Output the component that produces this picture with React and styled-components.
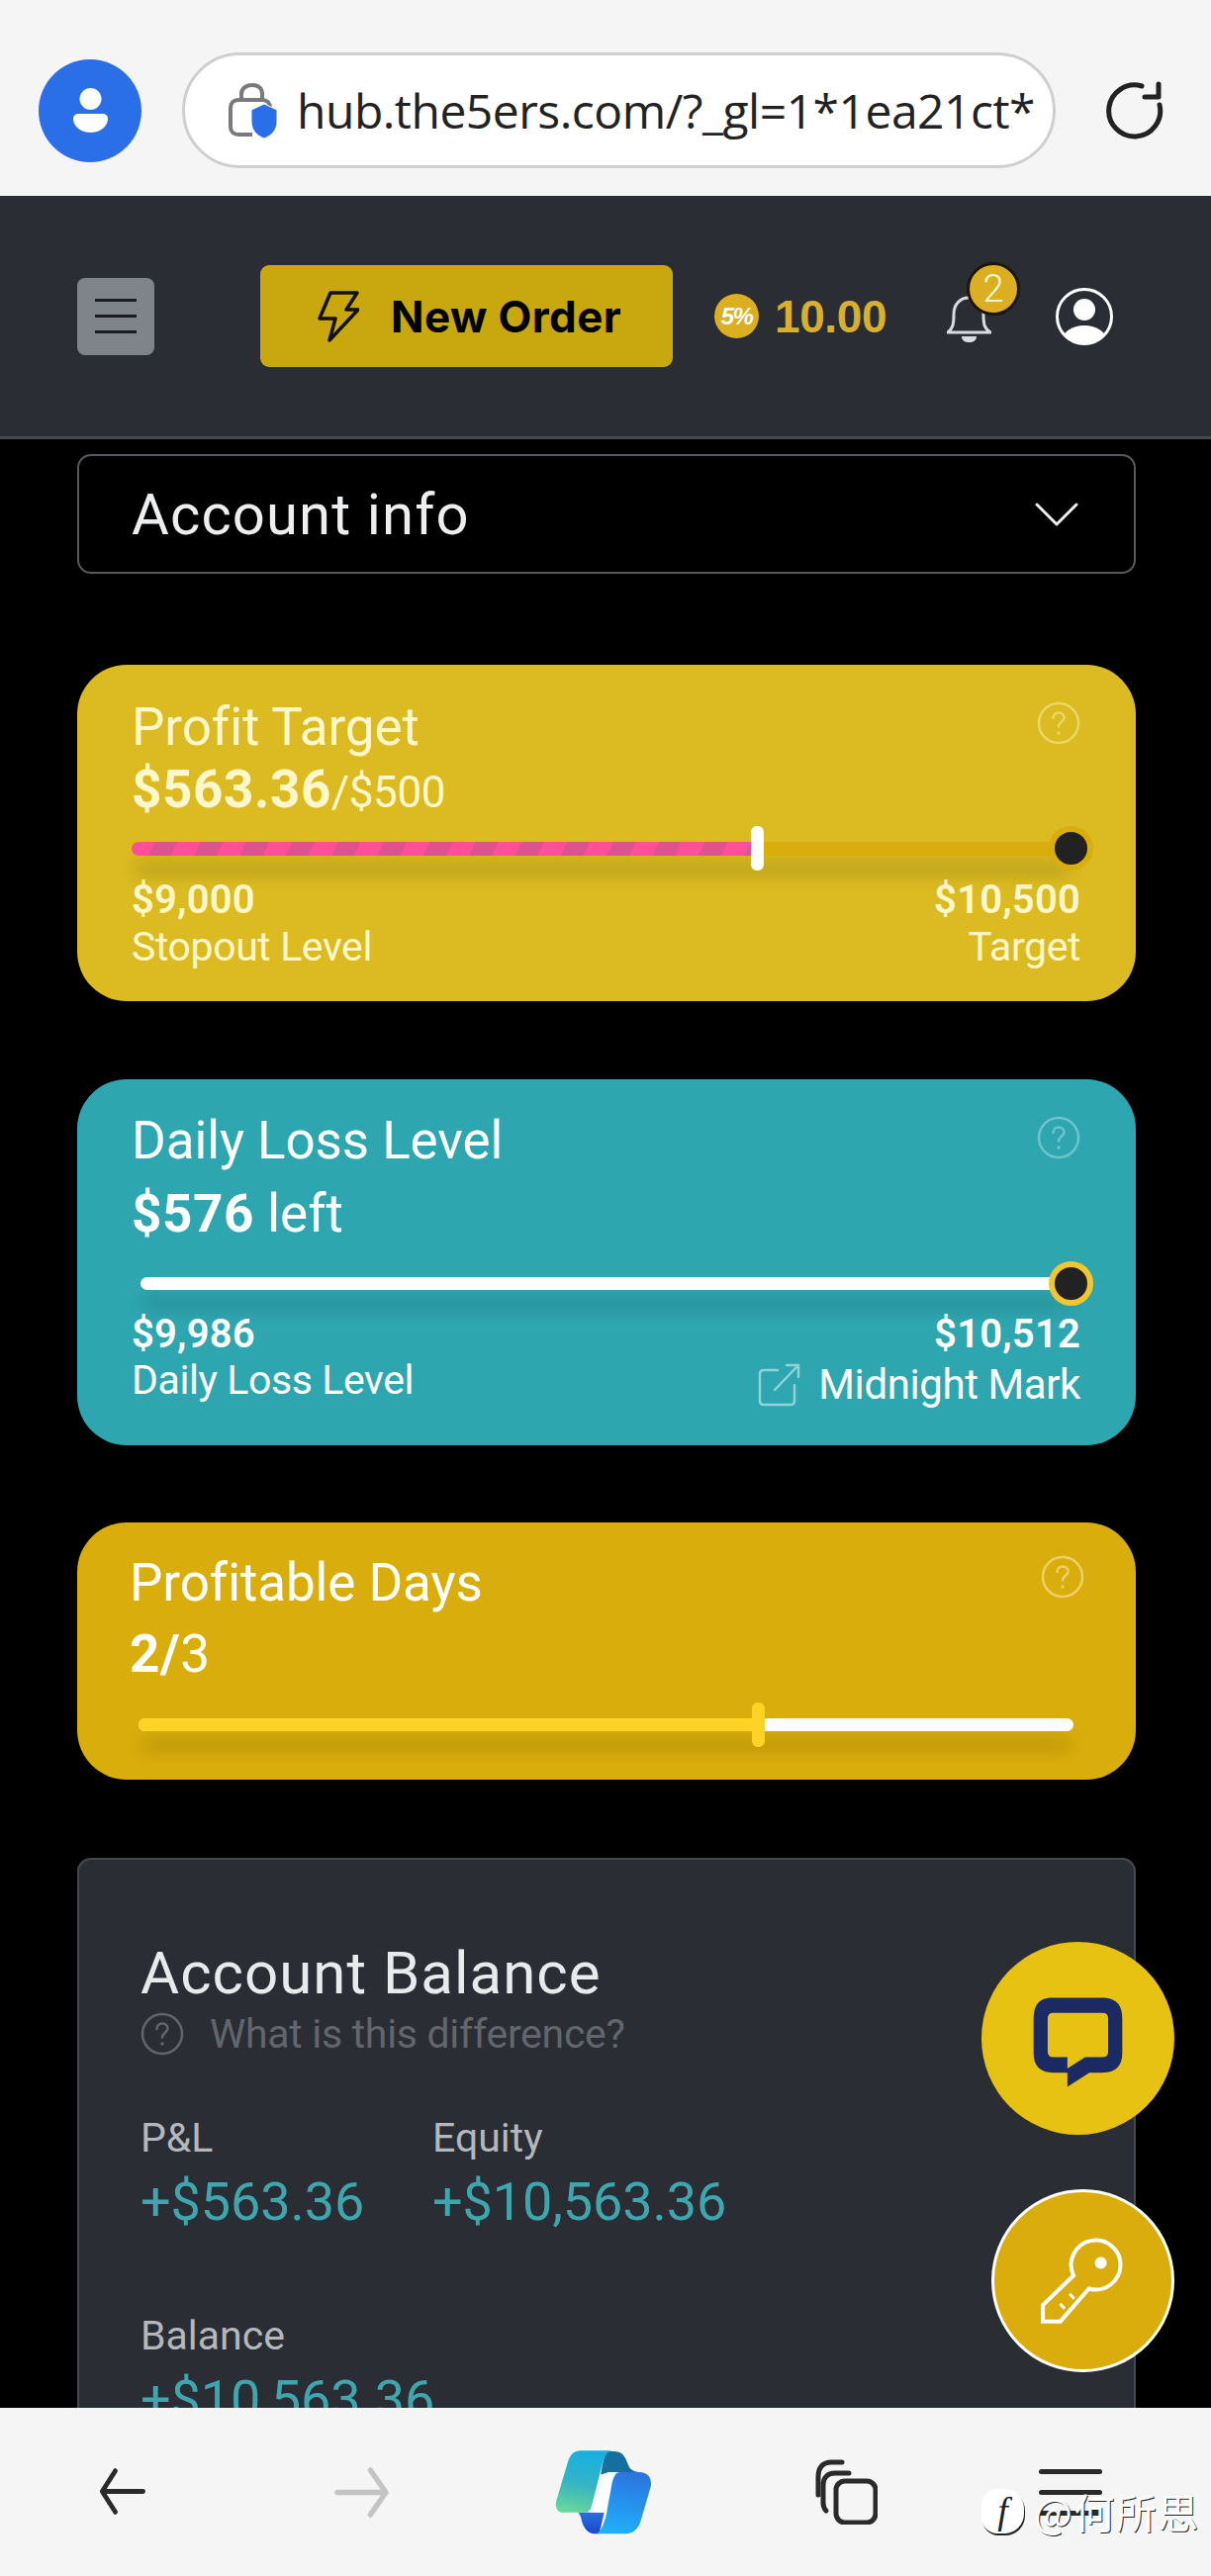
import React from 'react';
import styled, { createGlobalStyle } from 'styled-components';

const GlobalStyle = createGlobalStyle`
  html, body {
    margin: 0;
    padding: 0;
    background: #000;
  }
  body {
    font-family: Roboto, "Liberation Sans", sans-serif;
  }
  * {
    box-sizing: border-box;
  }
`;

const Screen = styled.div`
  position: relative;
  width: 1224px;
  height: 2604px;
  overflow: hidden;
  display: flex;
  flex-direction: column;
  background: #000;
`;

/* browser chrome, top */
const BrowserBar = styled.div`
  height: 198px;
  flex: none;
  background: #f5f5f5;
  display: flex;
  align-items: center;
  padding: 25px 49px 0 39px;
`;

const Avatar = styled.div`
  width: 104px;
  height: 104px;
  border-radius: 50%;
  background: #2a6fe8;
  display: flex;
  align-items: center;
  justify-content: center;
  flex: none;
`;

const UrlPill = styled.div`
  width: 883px;
  height: 117px;
  margin-left: 41px;
  border: 3px solid #cfcfcf;
  border-radius: 59px;
  background: #fff;
  display: flex;
  align-items: center;
  padding-left: 44px;
  flex: none;
  overflow: hidden;
`;

const UrlText = styled.span`
  margin-left: 19px;
  font-family: "Open Sans", sans-serif;
  font-size: 48px;
  letter-spacing: -0.5px;
  color: #222;
  white-space: nowrap;
`;

const RefreshSlot = styled.div`
  margin-left: 51px;
  display: flex;
`;

/* site header */
const Header = styled.header`
  height: 246px;
  flex: none;
  background: #2a2d34;
  border-bottom: 3px solid #454a50;
  display: flex;
  align-items: center;
  padding: 0 0 0 78px;
`;

const MenuButton = styled.div`
  width: 78px;
  height: 78px;
  border-radius: 8px;
  background: #7f848a;
  display: flex;
  flex-direction: column;
  justify-content: center;
  align-items: center;
  gap: 13px;
  flex: none;
  span {
    display: block;
    width: 42px;
    height: 3px;
    background: #1a1c20;
  }
`;

const OrderButton = styled.div`
  width: 417px;
  height: 103px;
  margin-left: 107px;
  border-radius: 9px;
  background: #c8a70f;
  display: flex;
  align-items: center;
  padding-left: 58px;
  gap: 32px;
  color: #000;
  font-family: Inter, sans-serif;
  font-weight: 700;
  font-size: 44px;
  letter-spacing: 0.4px;
  white-space: nowrap;
  flex: none;
`;

const Coin = styled.div`
  width: 45px;
  height: 45px;
  margin-left: 42px;
  border-radius: 50%;
  background: #dcae22;
  color: #fff;
  font-family: "Liberation Sans", sans-serif;
  font-style: italic;
  font-weight: 700;
  font-size: 24px;
  letter-spacing: -1.5px;
  display: flex;
  align-items: center;
  justify-content: center;
  flex: none;
`;

const CoinValue = styled.span`
  margin-left: 16px;
  width: 114px;
  font-family: "Liberation Sans", sans-serif;
  font-weight: 700;
  font-size: 46px;
  letter-spacing: -0.4px;
  color: #d8b02d;
  flex: none;
`;

const BellWrap = styled.div`
  position: relative;
  margin-left: 60px;
  width: 45px;
  height: 52px;
  flex: none;
`;

const Badge = styled.span`
  position: absolute;
  left: 20px;
  top: -29px;
  width: 54px;
  height: 54px;
  border-radius: 50%;
  background: #dcae22;
  border: 3px solid #1c1608;
  color: #fff8d8;
  font-size: 38px;
  font-weight: 300;
  display: flex;
  align-items: center;
  justify-content: center;
`;

const UserSlot = styled.div`
  margin-left: 65px;
  display: flex;
`;

/* scrolling page */
const Content = styled.main`
  flex: 1;
  min-height: 0;
  overflow: hidden;
  padding: 15px 76px 0 78px;
`;

const SelectBox = styled.div`
  height: 121px;
  border: 2px solid #55585d;
  border-radius: 14px;
  display: flex;
  align-items: center;
  justify-content: space-between;
  padding: 0 56px 0 53px;
  color: #eceef0;
  font-size: 58px;
  font-weight: 400;
  letter-spacing: 1.1px;
`;

const Card = styled.section`
  position: relative;
  margin-top: ${(p) => p.$mt}px;
  border-radius: 50px;
  background: ${(p) => p.$bg};
  color: ${(p) => p.$fg};
  padding: ${(p) => p.$pt}px 56px ${(p) => p.$pb}px ${(p) => p.$pl || 55}px;
`;

const HelpSlot = styled.div`
  position: absolute;
  right: ${(p) => p.$right}px;
  top: ${(p) => p.$top}px;
  display: flex;
`;

const CardTitle = styled.h2`
  margin: 0;
  font-size: 53px;
  line-height: 50px;
  font-weight: 400;
  letter-spacing: -0.1px;
`;

const CardValue = styled.div`
  margin-top: ${(p) => p.$mt}px;
  font-size: 53px;
  line-height: 50px;
  font-weight: 400;
  letter-spacing: 0;
  white-space: nowrap;
  b {
    font-weight: 700;
    line-height: 1;
    letter-spacing: 0.6px;
  }
  small {
    font-size: 44px;
    line-height: 1;
    letter-spacing: -0.4px;
  }
`;

const Track = styled.div`
  position: relative;
  height: 45px;
  margin-top: ${(p) => p.$mt}px;
  display: flex;
  align-items: center;
  padding: 0 ${(p) => p.$inR}px 0 ${(p) => p.$inL}px;
`;

const Line = styled.div`
  flex: 1;
  height: ${(p) => p.$h}px;
  border-radius: 7px;
  background: ${(p) => p.$bg};
  overflow: hidden;
`;

const LineShadow = styled.div`
  flex: 1;
  border-radius: 7px;
  box-shadow: 0 20px 18px -2px rgba(0, 0, 0, 0.2);
`;

const Fill = styled.div`
  height: 100%;
  background: ${(p) => p.$bg};
`;

const Marker = styled.span`
  position: absolute;
  left: ${(p) => p.$left}px;
  top: 0;
  width: 13px;
  height: 45px;
  border-radius: 6px;
  background: ${(p) => p.$bg};
`;

const EndDot = styled.span`
  position: absolute;
  right: -13px;
  top: 0;
  width: 45px;
  height: 45px;
  border-radius: 50%;
  background: #222;
  border: 6px solid ${(p) => p.$ring};
`;

const ValueRow = styled.div`
  display: flex;
  justify-content: space-between;
  margin-top: ${(p) => p.$mt}px;
  font-size: ${(p) => (p.$strong ? 40 : 41)}px;
  line-height: ${(p) => (p.$strong ? 44 : 46)}px;
  font-weight: ${(p) => (p.$strong ? 600 : 400)};
  letter-spacing: ${(p) => (p.$strong ? 0.2 : -0.4)}px;
`;

const RightLabel = styled.span`
  display: flex;
  align-items: center;
  gap: 18px;
  font-size: 42px;
  transform: translateY(${(p) => p.$shift || 0}px);
`;

const BalancePanel = styled.section`
  margin-top: 79px;
  height: 700px;
  background: #2a2d34;
  border: 2px solid #45484e;
  border-radius: 14px;
  padding: 85px 0 0 62px;
`;

const BalanceTitle = styled.h2`
  margin: 0;
  color: #e8eaec;
  font-size: 60px;
  line-height: 60px;
  font-weight: 400;
  letter-spacing: 1px;
`;

const DiffRow = styled.div`
  margin-top: 8px;
  height: 46px;
  display: flex;
  align-items: center;
  gap: 26px;
  color: #62666c;
  font-size: 41px;
  font-weight: 400;
  letter-spacing: -0.3px;
`;

const StatRow = styled.div`
  display: flex;
  margin-top: ${(p) => p.$mt}px;
`;

const Stat = styled.div`
  width: ${(p) => p.$w}px;
  flex: none;
`;

const StatLabel = styled.div`
  color: #b4b7bb;
  font-size: 41px;
  line-height: 46px;
  font-weight: 400;
  letter-spacing: 0;
`;

const StatValue = styled.div`
  margin-top: 11px;
  color: #3fa6ad;
  font-size: 54px;
  line-height: 62px;
  font-weight: 400;
  letter-spacing: -0.1px;
  white-space: nowrap;
`;

const Fab = styled.div`
  position: absolute;
  left: ${(p) => p.$left}px;
  top: ${(p) => p.$top}px;
  width: ${(p) => p.$size}px;
  height: ${(p) => p.$size}px;
  padding-top: ${(p) => p.$pt || 0}px;
  border-radius: 50%;
  background: ${(p) => p.$bg};
  border: ${(p) => (p.$ring ? '3px solid #fff' : 'none')};
  display: flex;
  align-items: center;
  justify-content: center;
`;

/* browser chrome, bottom */
const BottomBar = styled.nav`
  position: relative;
  height: 170px;
  flex: none;
  background: #f5f5f5;
  display: flex;
  align-items: center;
  padding: 0 0 0 100px;
`;

const NavSlot = styled.div`
  display: flex;
  margin-left: ${(p) => p.$ml || 0}px;
  transform: translateY(${(p) => p.$dy || 0}px);
`;

const MenuLines = styled.div`
  margin-left: 163px;
  display: flex;
  flex-direction: column;
  gap: 16px;
  span {
    display: block;
    width: 64px;
    height: 5px;
    background: #2a2a2a;
    border-radius: 3px;
  }
`;

const Watermark = styled.div`
  position: absolute;
  left: 992px;
  top: 81px;
  display: flex;
  align-items: center;
  gap: 10px;
  color: #fff;
  font-family: "Noto Sans CJK SC", sans-serif;
  font-size: 41px;
  line-height: 46px;
  letter-spacing: 1.5px;
  text-shadow: 1px 1px 0 #222;
  white-space: nowrap;
`;

const WatermarkLogo = styled.span`
  width: 43px;
  height: 45px;
  border-radius: 16px 20px 20px 16px;
  background: #fff;
  box-shadow: 1px 2px 0 #222;
  color: #222;
  font-family: "Liberation Serif", serif;
  font-style: italic;
  font-size: 38px;
  letter-spacing: 0;
  text-shadow: none;
  display: flex;
  align-items: center;
  justify-content: center;
`;

const HelpIcon = ({ size = 44, color, sw = 2.5 }) => (
  <svg width={size} height={size} viewBox="0 0 44 44" fill="none">
    <circle cx="22" cy="22" r="20" stroke={color} strokeWidth={sw} />
    <path d="M16.5 17c0-3.4 2.4-5.4 5.5-5.4s5.5 2 5.500 4.900c0 4.200-5.500 4.400-5.500 9" stroke={color} strokeWidth={sw} strokeLinecap="round" />
    <circle cx="22" cy="32" r="1.8" fill={color} />
  </svg>
);

const PersonIcon = () => (
  <svg width="35" height="45" viewBox="0 0 35 45">
    <circle cx="17.500" cy="11" r="11" fill="#fff" />
    <path d="M6 26h23c4 0 6 2 6 5 0 8-8 14-17.500 14S0 39 0 31c0-3 2-5 6-5z" fill="#fff" />
  </svg>
);

const LockIcon = () => (
  <svg width="50" height="56" viewBox="0 0 50 56" fill="none">
    <path d="M13 17v-6c0-5 4-9 11-9s10 4 10 9v6" stroke="#7a7a7a" strokeWidth="4" />
    <path d="M24 52H10c-5 0-8-3-8-8V25c0-5 3-8 8-8h24c5 0 8 3 8 8" stroke="#7a7a7a" strokeWidth="4" />
    <path d="M36 21l13 6v12c0 8-5 14-13 17-8-3-13-9-13-17V27z" fill="#2a6fe8" stroke="#fff" strokeWidth="1" />
  </svg>
);

const RefreshIcon = () => (
  <svg width="60" height="60" viewBox="0 0 60 60" fill="none" stroke="#222" strokeWidth="5" strokeLinecap="round" strokeLinejoin="round">
    <path d="M36 5A26 26 0 1 0 54 24" />
    <path d="M53 3v13H39" />
  </svg>
);

const BoltIcon = () => (
  <svg width="42" height="52" viewBox="0 0 42 52" fill="none" stroke="#111" strokeWidth="3.500" strokeLinejoin="round">
    <path d="M13 2h27l-11 17h12L12 50l6-22H2z" />
  </svg>
);

const BellIcon = () => (
  <svg width="45" height="52" viewBox="0 0 45 52" fill="none">
    <path d="M1 42c5-4 6-8 6-18 0-10 6-17 15-17s15 7 15 17c0 10 1 14 7 18z" stroke="#d8dce0" strokeWidth="3" strokeLinejoin="round" />
    <path d="M15 46h15c0 4-3 6-7.500 6S15 50 15 46z" fill="#d8dce0" />
  </svg>
);

const UserIcon = () => (
  <svg width="58" height="58" viewBox="0 0 58 58">
    <defs>
      <clipPath id="userClip">
        <circle cx="29" cy="29" r="27.500" />
      </clipPath>
    </defs>
    <circle cx="29" cy="29" r="27.500" fill="none" stroke="#fff" strokeWidth="3" />
    <circle cx="29" cy="22" r="11" fill="#fff" />
    <ellipse cx="29" cy="54" rx="23" ry="16" fill="#fff" clipPath="url(#userClip)" />
  </svg>
);

const Chevron = () => (
  <svg width="44" height="26" viewBox="0 0 44 26" fill="none" stroke="#eceef0" strokeWidth="3" strokeLinecap="round" strokeLinejoin="round">
    <path d="M2 3l20 20L42 3" />
  </svg>
);

const ExternalIcon = () => (
  <svg width="44" height="44" viewBox="0 0 44 44" fill="none" stroke="#8fd3d8" strokeWidth="2.500" strokeLinecap="round" strokeLinejoin="round">
    <path d="M21 7H7c-2.500 0-4 1.500-4 4v27c0 2.500 1.500 4 4 4h27c2.500 0 4-1.500 4-4V22" />
    <path d="M18 27L42 2M30 2h12v12" />
  </svg>
);

const ChatIcon = () => (
  <svg width="93" height="95" viewBox="70 50 280 285">
    <path
      d="M125 57H290Q345 60 345 120V225Q345 285 285 285H245L178 328V285H135Q75 285 75 225V120Q75 60 125 57ZM135 103Q118 103 118 120V220Q118 238 135 238H178V272L232 238H285Q302 238 302 220V120Q302 103 285 103Z"
      fill="#1c2a63"
      fillRule="evenodd"
    />
  </svg>
);

const KeyIcon = () => (
  <svg width="90" height="88" viewBox="60 35 270 265" fill="none" stroke="#fff" strokeWidth="12" strokeLinejoin="miter">
    <path d="M165 150A75 75 0 1 1 212 190L125 290H72V240Z" />
    <path d="M153 206l14 15M124 236l14 15" strokeWidth="9" />
    <circle cx="248" cy="112" r="18" fill="#fff" stroke="none" />
  </svg>
);

const BackIcon = ({ color, flip, w, h }) => (
  <svg width={w} height={h} viewBox="0 0 58 52" preserveAspectRatio="none" fill="none" stroke={color} strokeWidth="5.500" strokeLinecap="round" strokeLinejoin="round" style={flip ? { transform: 'scaleX(-1)' } : undefined}>
    <path d="M20 3L4 26l16 23M5 26h49" />
  </svg>
);

const CopilotIcon = () => (
  <svg width="100" height="88" viewBox="60 45 300 265">
    <defs>
      <linearGradient id="bladeLeft" x1="0.6" y1="0" x2="0.4" y2="1">
        <stop offset="0" stopColor="#14b0e2" />
        <stop offset="0.55" stopColor="#35b4c4" />
        <stop offset="1" stopColor="#66d69a" />
      </linearGradient>
      <linearGradient id="bladeRight" x1="0.6" y1="0" x2="0.4" y2="1">
        <stop offset="0" stopColor="#2b74e0" />
        <stop offset="1" stopColor="#1fb0f8" />
      </linearGradient>
      <linearGradient id="ribbonLow" x1="0.3" y1="0" x2="0.3" y2="1">
        <stop offset="0" stopColor="#2a6fe0" />
        <stop offset="1" stopColor="#1e46c8" />
      </linearGradient>
    </defs>
    <path d="M225 54H245C270 54 280 70 288 95C293 108 300 115 320 117H230L205 125C210 90 215 65 225 54Z" fill="#14709f" />
    <path d="M135 240H215L200 305H190C165 305 155 290 148 270C145 258 142 245 135 240Z" fill="url(#ribbonLow)" />
    <path d="M225 118H255L215 240H175Z" fill="#fff" />
    <path d="M140 52H238C222 56 214 75 208 98L178 215C175 232 168 240 155 240H92C72 240 65 225 69 205L105 85C112 64 122 54 140 52Z" fill="url(#bladeLeft)" />
    <path d="M262 117H325C350 120 360 135 357 160L325 270C315 295 300 305 275 305H190C205 300 215 275 222 245L238 155C243 130 250 119 262 117Z" fill="url(#bladeRight)" />
  </svg>
);

const TabsIcon = () => (
  <svg width="64" height="66" viewBox="0 0 64 66" fill="none" stroke="#2a2a2a" strokeWidth="5" strokeLinecap="round">
    <rect x="22" y="22" width="40" height="42" rx="9" />
    <path d="M12 52c-2-2-3-4-3-8V26c0-7 4-12 12-12h14" />
    <path d="M4 36V18C4 8 9 3 17 3h11" />
  </svg>
);

const App = () => (
  <Screen>
    <GlobalStyle />
    <BrowserBar>
      <Avatar><PersonIcon /></Avatar>
      <UrlPill>
        <LockIcon />
        <UrlText>hub.the5ers.com/?_gl=1*1ea21ct*</UrlText>
      </UrlPill>
      <RefreshSlot><RefreshIcon /></RefreshSlot>
    </BrowserBar>

    <Header>
      <MenuButton><span /><span /><span /></MenuButton>
      <OrderButton><BoltIcon />New Order</OrderButton>
      <Coin>5%</Coin>
      <CoinValue>10.00</CoinValue>
      <BellWrap>
        <BellIcon />
        <Badge>2</Badge>
      </BellWrap>
      <UserSlot><UserIcon /></UserSlot>
    </Header>

    <Content>
      <SelectBox>Account info<Chevron /></SelectBox>

      <Card $mt={92} $bg="#dbbb21" $fg="#fff7cc" $pt={38} $pb={32}>
        <HelpSlot $right={56} $top={37}><HelpIcon color="#ecd667" /></HelpSlot>
        <CardTitle>Profit Target</CardTitle>
        <CardValue $mt={12}><b>$563.36</b><small>/$500</small></CardValue>
        <Track $mt={10} $inL={0} $inR={7}>
          <LineShadow>
            <Line $h={14} $bg="#d9ad0c">
              <Fill $bg="repeating-linear-gradient(115deg, #ff4f9a 0 21px, #dc5390 21px 42px)" style={{ width: 632 }} />
            </Line>
          </LineShadow>
          <Marker $left={626} $bg="#fff" />
          <EndDot $ring="#d9ad0c" />
        </Track>
        <ValueRow $strong $mt={8}><span>$9,000</span><span>$10,500</span></ValueRow>
        <ValueRow $mt={2}><span>Stopout Level</span><span>Target</span></ValueRow>
      </Card>

      <Card $mt={79} $bg="#2ea6b0" $fg="#fff" $pt={37} $pb={43}>
        <HelpSlot $right={56} $top={37}><HelpIcon color="#6fc4cb" /></HelpSlot>
        <CardTitle>Daily Loss Level</CardTitle>
        <CardValue $mt={23}><b>$576</b> left</CardValue>
        <Track $mt={21} $inL={9} $inR={7}>
          <LineShadow><Line $h={13} $bg="#fff" /></LineShadow>
          <EndDot $ring="#f3c52f" />
        </Track>
        <ValueRow $strong $mt={7}><span>$9,986</span><span>$10,512</span></ValueRow>
        <ValueRow $mt={1}>
          <span>Daily Loss Level</span>
          <RightLabel $shift={5}><ExternalIcon />Midnight Mark</RightLabel>
        </ValueRow>
      </Card>

      <Card $mt={78} $bg="#d9ad0b" $fg="#fff" $pt={36} $pb={33} $pl={53}>
        <HelpSlot $right={52} $top={33}><HelpIcon color="#ecd06a" /></HelpSlot>
        <CardTitle>Profitable Days</CardTitle>
        <CardValue $mt={21}><b>2/</b>3</CardValue>
        <Track $mt={22} $inL={9} $inR={7}>
          <LineShadow>
            <Line $h={13} $bg="#fff">
              <Fill $bg="#ffd326" style={{ width: 626 }} />
            </Line>
          </LineShadow>
          <Marker $left={629} $bg="#ffd326" />
        </Track>
      </Card>

      <BalancePanel>
        <BalanceTitle>Account Balance</BalanceTitle>
        <DiffRow><HelpIcon color="#62666c" />What is this difference?</DiffRow>
        <StatRow $mt={59}>
          <Stat $w={295}>
            <StatLabel>P&amp;L</StatLabel>
            <StatValue>+$563.36</StatValue>
          </Stat>
          <Stat $w={400}>
            <StatLabel>Equity</StatLabel>
            <StatValue>+$10,563.36</StatValue>
          </Stat>
        </StatRow>
        <StatRow $mt={81}>
          <Stat $w={400}>
            <StatLabel>Balance</StatLabel>
            <StatValue>+$10,563.36</StatValue>
          </Stat>
        </StatRow>
      </BalancePanel>
    </Content>

    <BottomBar>
      <NavSlot $dy={-1}><BackIcon color="#2a2a2a" w={48} h={47} /></NavSlot>
      <NavSlot $ml={189}><BackIcon color="#c4c4c4" w={57} h={51} flip /></NavSlot>
      <NavSlot $ml={165}><CopilotIcon /></NavSlot>
      <NavSlot $ml={164}><TabsIcon /></NavSlot>
      <MenuLines><span /><span /><span /></MenuLines>
      <Watermark><WatermarkLogo>f</WatermarkLogo>@何所思</Watermark>
    </BottomBar>

    <Fab $left={992} $top={1963} $size={195} $pt={8} $bg="#e8c213"><ChatIcon /></Fab>
    <Fab $left={1002} $top={2213} $size={185} $bg="#dbad0c" $ring><KeyIcon /></Fab>
  </Screen>
);

export default App;
